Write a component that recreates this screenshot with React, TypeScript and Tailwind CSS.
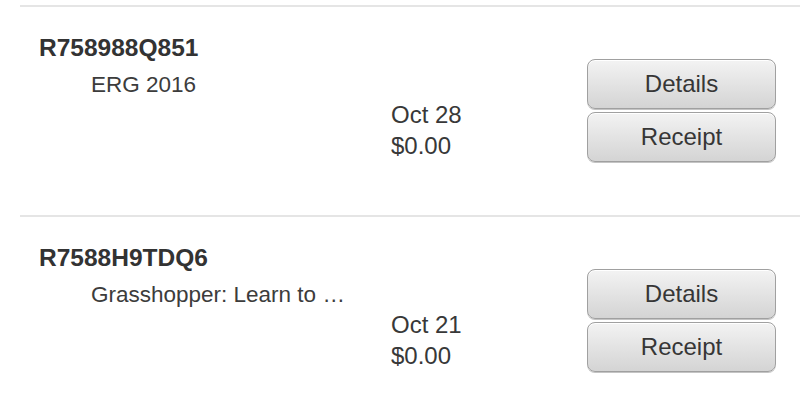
import React from "react";

interface PurchaseRowProps {
  orderId: string;
  title: string;
  date: string;
  total: string;
}

function PurchaseButton({ label }: { label: string }) {
  return (
    <button className="h-[50px] w-full rounded-[8px] border border-[#a0a0a0] bg-gradient-to-b from-[#f3f3f3] to-[#d4d4d4] text-[24px] leading-none text-[#363636] shadow-[inset_0_1px_0_#ffffff,0_1px_0_#c4c4c4]">
      {label}
    </button>
  );
}

function PurchaseRow({ orderId, title, date, total }: PurchaseRowProps) {
  return (
    <div className="ml-[20px] flex h-[210px] items-start border-t-2 border-[#e5e5e5]">
      <div className="flex-1 pl-[19px] pt-[27px]">
        <h3 className="text-[24.5px] font-bold leading-[28px] text-[#333333]">
          {orderId}
        </h3>
        <p className="ml-[52px] mt-[9px] text-[22.5px] leading-[28px] text-[#3c3c3c]">
          {title}
        </p>
      </div>

      <div className="w-[196px] pt-[92px] text-[24px] leading-[31px] text-[#383838]">
        <p>{date}</p>
        <p>{total}</p>
      </div>

      <div className="mr-[24px] flex w-[189px] flex-col gap-[3px] pt-[52px]">
        <PurchaseButton label="Details" />
        <PurchaseButton label="Receipt" />
      </div>
    </div>
  );
}

export default function App() {
  return (
    <div
      className="h-[400px] w-[800px] overflow-hidden bg-white pt-[5px]"
      style={{ fontFamily: '"Liberation Sans", Arial, sans-serif' }}
    >
      <PurchaseRow orderId="R758988Q851" title="ERG 2016" date="Oct 28" total="$0.00" />
      <PurchaseRow
        orderId="R7588H9TDQ6"
        title="Grasshopper: Learn to …"
        date="Oct 21"
        total="$0.00"
      />
    </div>
  );
}
